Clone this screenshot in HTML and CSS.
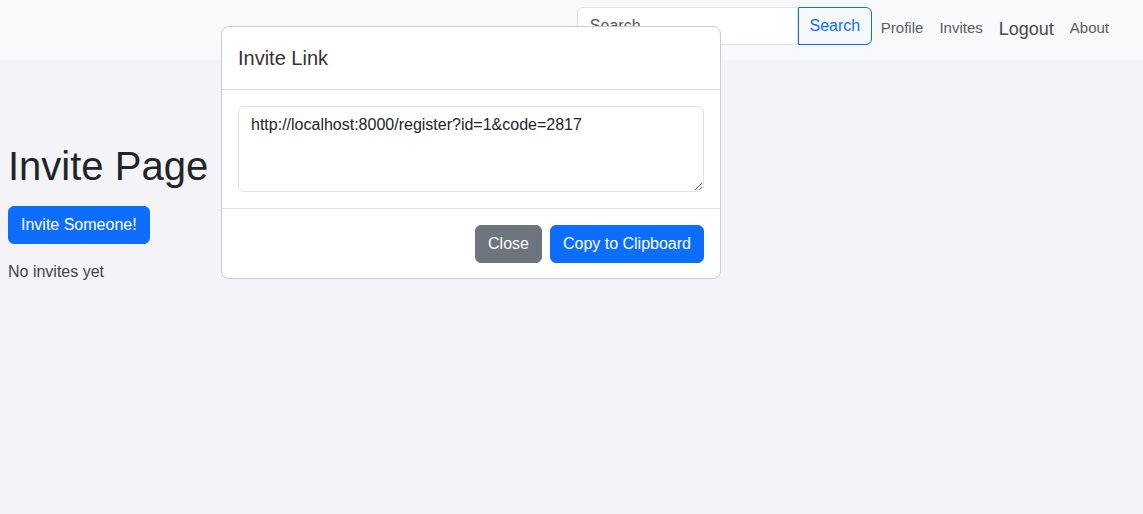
FILE: index.html
```html
<!DOCTYPE html>
<html>
<head>
<meta charset="utf-8">
<link rel="stylesheet" href="styles.css">
</head>
<body>
<nav class="navbar">
  <form class="search">
    <input class="search-input" type="text" placeholder="Search">
    <button class="search-btn" type="button">Search</button>
  </form>
  <a class="nav-link">Profile</a>
  <a class="nav-link">Invites</a>
  <a class="nav-link logout">Logout</a>
  <a class="nav-link">About</a>
</nav>
<main class="content">
  <h1 class="title">Invite Page</h1>
  <button class="btn btn-primary" type="button">Invite Someone!</button>
  <p class="empty">No invites yet</p>
</main>
<div class="modal">
  <div class="modal-header">
    <h5 class="modal-title">Invite Link</h5>
  </div>
  <div class="modal-body">
    <textarea class="link-box">http://localhost:8000/register?id=1&amp;code=2817</textarea>
  </div>
  <div class="modal-footer">
    <button class="btn btn-secondary" type="button">Close</button>
    <button class="btn btn-primary" type="button">Copy to Clipboard</button>
  </div>
</div>
</body>
</html>
```
FILE: styles.css
```css
* { box-sizing: border-box; }
html, body { margin: 0; padding: 0; }
body {
  background: #f3f3f8;
  font-family: "Liberation Sans", Arial, sans-serif;
  font-size: 16px;
  line-height: 1.5;
  color: #212529;
  width: 1143px;
  height: 514px;
  overflow: hidden;
  position: relative;
}
.navbar {
  height: 60px;
  background: #f8f9fa;
  display: flex;
  align-items: center;
  justify-content: flex-end;
  padding: 0 26px 8px 0;
}
.search { display: flex; margin-right: 1px; }
.search-input {
  width: 221px;
  height: 38px;
  border: 1px solid #dee2e6;
  border-radius: 6px 0 0 6px;
  padding: 6px 12px;
  font: 16px "Liberation Sans", Arial, sans-serif;
  background: #fff;
  color: #212529;
}
.search-input::placeholder { color: #555; }
.search-btn {
  width: 74px;
  height: 38px;
  border: 1px solid #0d6efd;
  border-radius: 0 6px 6px 0;
  background: #f6f9fe;
  color: #0d6efd;
  font: 16px "Liberation Sans", Arial, sans-serif;
  padding: 6px 10px;
}
.nav-link {
  color: #5c5c5c;
  font-size: 15px;
  padding: 8px 8px;
  margin-top: 5px;
}
.logout { font-size: 18px; color: #4a4a4a; margin-top: 6px; }
.content { padding: 82px 8px 0; }
.title {
  font-size: 40px;
  font-weight: 400;
  line-height: 48px;
  margin: 0 0 16px;
}
.btn {
  height: 38px;
  padding: 6px 12px;
  border: 1px solid transparent;
  border-radius: 6px;
  font: 16px "Liberation Sans", Arial, sans-serif;
  color: #fff;
}
.btn-primary { background: #0d6efd; border-color: #0d6efd; }
.btn-secondary { background: #6c757d; border-color: #6c757d; }
.empty { margin: 16px 0 0; color: #444; }
.modal {
  position: absolute;
  left: 221px;
  top: 26px;
  width: 500px;
  background: #fff;
  border: 1px solid #c9cbce;
  border-radius: 8px;
}
.modal-header {
  padding: 16px;
  border-bottom: 1px solid #dee2e6;
}
.modal-title {
  margin: 0;
  font-size: 20px;
  font-weight: 400;
  line-height: 30px;
  color: #333;
}
.modal-body { padding: 16px; }
.link-box {
  display: block;
  width: 466px;
  height: 86px;
  border: 1px solid #dee2e6;
  border-radius: 6px;
  padding: 6px 12px;
  font: 16px/1.5 "Liberation Sans", Arial, sans-serif;
  color: #212529;
  resize: vertical;
}
.modal-footer {
  display: flex;
  justify-content: flex-end;
  gap: 8px;
  padding: 16px 16px 15px;
  border-top: 1px solid #dee2e6;
}
```
